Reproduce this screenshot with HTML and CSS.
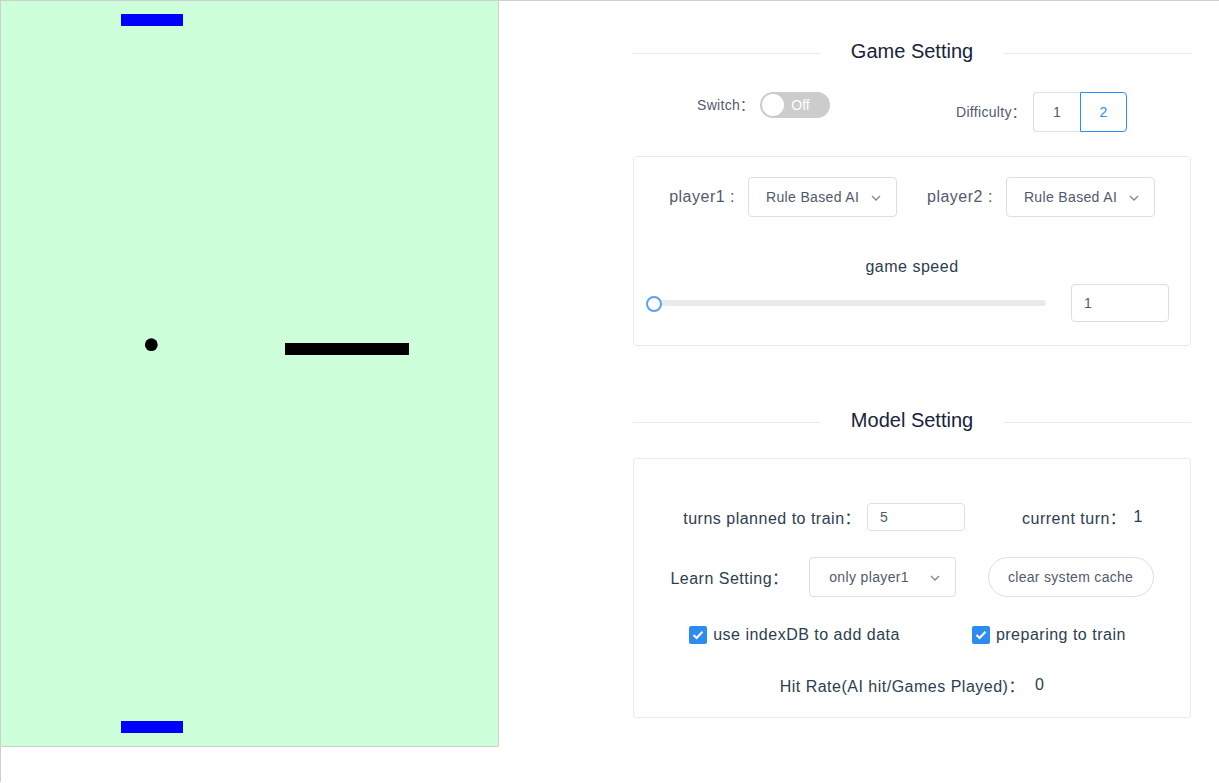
FILE: index.html
```html
<!DOCTYPE html>
<html>
<head>
<meta charset="utf-8">
<link rel="stylesheet" href="styles.css">
</head>
<body>
<div class="page">
  <div class="board">
    <svg width="497" height="745" viewBox="0 0 497 745">
      <rect x="120" y="13" width="62" height="12" fill="#0000ff"/>
      <rect x="120" y="720" width="62" height="12" fill="#0000ff"/>
      <circle cx="150.3" cy="343.7" r="6.4" fill="#000"/>
      <rect x="284" y="342" width="124" height="12" fill="#000"/>
    </svg>
  </div>
  <div class="panel">
    <div class="divider divider-first"><span class="divider-text">Game Setting</span></div>

    <div class="top-row">
      <div class="switch-item">
        <span class="form-label">Switch：</span>
        <span class="switch"><span class="switch-knob"></span><span class="switch-text">Off</span></span>
      </div>
      <div class="diff-item">
        <span class="form-label">Difficulty：</span>
        <div class="radio-group">
          <span class="radio-btn">1</span>
          <span class="radio-btn radio-active">2</span>
        </div>
      </div>
    </div>

    <div class="card card-game">
      <div class="players-row">
        <span class="player-label">player1 :</span>
        <div class="select select-player"><span class="select-text">Rule Based AI</span><svg class="chev" width="10" height="6" viewBox="0 0 10 6"><path d="M1 1 L5 5 L9 1" fill="none" stroke="#808695" stroke-width="1.3"/></svg></div>
        <span class="player-label player-label-2">player2 :</span>
        <div class="select select-player"><span class="select-text">Rule Based AI</span><svg class="chev" width="10" height="6" viewBox="0 0 10 6"><path d="M1 1 L5 5 L9 1" fill="none" stroke="#808695" stroke-width="1.3"/></svg></div>
      </div>
      <div class="speed-title">game speed</div>
      <div class="slider-row">
        <div class="slider">
          <div class="slider-track"></div>
          <span class="slider-handle"></span>
        </div>
        <div class="input input-speed">1</div>
      </div>
    </div>

    <div class="divider divider-second"><span class="divider-text">Model Setting</span></div>

    <div class="card card-model">
      <div class="model-row row-turns">
        <span class="text">turns planned to train：</span>
        <div class="input input-small">5</div>
        <span class="text current-turn">current turn：</span>
        <span class="text turn-value">1</span>
      </div>
      <div class="model-row row-learn">
        <span class="text">Learn Setting：</span>
        <div class="select select-learn"><span class="select-text select-text-center">only player1</span><svg class="chev" width="10" height="6" viewBox="0 0 10 6"><path d="M1 1 L5 5 L9 1" fill="none" stroke="#808695" stroke-width="1.3"/></svg></div>
        <span class="btn-round">clear system cache</span>
      </div>
      <div class="model-row row-check">
        <label class="check"><span class="check-box"><svg width="12" height="10" viewBox="0 0 12 10"><path d="M1.5 5 L4.6 8 L10.5 1.8" fill="none" stroke="#fff" stroke-width="2"/></svg></span><span class="text">use indexDB to add data</span></label>
        <label class="check check-2"><span class="check-box"><svg width="12" height="10" viewBox="0 0 12 10"><path d="M1.5 5 L4.6 8 L10.5 1.8" fill="none" stroke="#fff" stroke-width="2"/></svg></span><span class="text">preparing to train</span></label>
      </div>
      <div class="model-row row-hit">
        <span class="text">Hit Rate(AI hit/Games Played)：</span>
        <span class="text hit-value">0</span>
      </div>
    </div>
  </div>
</div>
</body>
</html>
```

FILE: styles.css
```css
html, body {
  margin: 0;
  padding: 0;
  background: #fff;
}
body {
  font-family: "Liberation Sans", Arial, "Noto Sans CJK SC", sans-serif;
  color: #2c3e50;
}
.page {
  display: flex;
  align-items: flex-start;
  border-top: 1px solid #cfcfcf;
  border-left: 1px solid #cfcfcf;
  min-height: 782px;
  box-sizing: border-box;
}
.board {
  width: 497px;
  height: 745px;
  background: #cdffda;
  border-right: 1px solid #cfcfcf;
  border-bottom: 1px solid #cfcfcf;
  flex: none;
}
.board svg { display: block; }

.panel {
  margin-left: 134px;
  width: 558px;
  flex: none;
}

/* dividers */
.divider {
  display: flex;
  align-items: center;
  height: 30px;
}
.divider::before, .divider::after {
  content: "";
  flex: 1;
  height: 1px;
  background: #eaeaea;
}
.divider-text {
  padding: 0 30px;
  font-size: 20px;
  color: #17233d;
  line-height: 30px;
  position: relative;
  top: -2px;
}
.divider-first { margin-top: 37px; }
.divider-second { margin-top: 61px; }

/* top row */
.top-row {
  margin-top: 24px;
  display: flex;
  justify-content: space-between;
  padding: 0 64px;
}
.form-label {
  font-size: 14px;
  color: #515a6e;
  letter-spacing: 0.3px;
}
.switch-item {
  display: flex;
  align-items: center;
  height: 24px;
}
.switch {
  margin-left: 6px;
  width: 70px;
  height: 26px;
  border-radius: 13px;
  background: #cccccc;
  display: flex;
  align-items: center;
  box-sizing: border-box;
  padding-left: 2px;
  flex: none;
  position: relative;
  top: 1px;
}
.switch-knob {
  width: 22px;
  height: 22px;
  border-radius: 50%;
  background: #fff;
}
.switch-text {
  color: #fff;
  font-size: 14px;
  margin-left: 7px;
}
.diff-item {
  display: flex;
  align-items: center;
}
.diff-item .form-label {
  position: relative;
  top: -1px;
}
.radio-group {
  display: flex;
  margin-left: 7px;
}
.radio-btn {
  width: 47px;
  height: 40px;
  box-sizing: border-box;
  border: 1px solid #dcdee2;
  display: flex;
  align-items: center;
  justify-content: center;
  font-size: 14px;
  color: #515a6e;
}
.radio-btn:first-child {
  border-radius: 4px 0 0 4px;
  border-right: none;
}
.radio-active {
  border-color: #2d8cf0;
  color: #2d8cf0;
  border-radius: 0 4px 4px 0;
}

/* cards */
.card {
  border: 1px solid #e8eaec;
  border-radius: 4px;
}
.card-game {
  margin-top: 24px;
  padding: 20px 20px 23px;
}
.players-row {
  display: flex;
  align-items: center;
  justify-content: center;
  height: 40px;
}
.player-label {
  font-size: 16px;
  color: #515a6e;
  margin-right: 13px;
  letter-spacing: 0.5px;
}
.player-label-2 { margin-left: 30px; }
.select {
  height: 40px;
  box-sizing: border-box;
  border: 1px solid #dcdee2;
  border-radius: 4px;
  display: flex;
  align-items: center;
  position: relative;
  flex: none;
}
.select-player {
  width: 149px;
  padding-left: 17px;
}
.select-text {
  font-size: 14px;
  color: #515a6e;
  letter-spacing: 0.35px;
}
.chev {
  position: absolute;
  right: 15px;
  top: 17px;
}
.speed-title {
  margin-top: 39px;
  line-height: 22px;
  text-align: center;
  font-size: 16px;
  color: #2c3e50;
  letter-spacing: 0.5px;
}
.slider-row {
  margin-top: 6px;
  display: flex;
  align-items: center;
  height: 38px;
}
.slider {
  width: 392px;
  height: 6px;
  position: relative;
  margin-left: 0;
}
.slider-track {
  height: 6px;
  background: #e8eaec;
  border-radius: 3px;
}
.slider-handle {
  position: absolute;
  left: -8px;
  top: -4px;
  width: 16px;
  height: 16px;
  box-sizing: border-box;
  border: 2px solid #57a3f3;
  border-radius: 50%;
  background: #fff;
}
.input {
  box-sizing: border-box;
  border: 1px solid #dcdee2;
  border-radius: 4px;
  display: flex;
  align-items: center;
  font-size: 14px;
  color: #515a6e;
  flex: none;
}
.input-speed {
  margin-left: 25px;
  width: 98px;
  height: 38px;
  padding-left: 12px;
}

/* model card */
.card-model {
  margin-top: 21px;
  padding: 43px 20px 21px;
}
.model-row {
  display: flex;
  align-items: center;
  justify-content: center;
}
.text {
  font-size: 16px;
  color: #2c3e50;
  letter-spacing: 0.5px;
  white-space: nowrap;
}
.row-turns {
  height: 30px;
  padding-left: 2px;
}
.input-small {
  width: 98px;
  height: 28px;
  margin-left: 6px;
  padding-left: 12px;
}
.current-turn { margin-left: 57px; }
.turn-value { margin-left: 7px; }
.row-learn {
  margin-top: 25px;
  height: 40px;
}
.select-learn {
  width: 147px;
  margin-left: 20px;
  padding-right: 26px;
  justify-content: center;
}
.btn-round {
  margin-left: 32px;
  width: 166px;
  height: 40px;
  box-sizing: border-box;
  border: 1px solid #dcdee2;
  border-radius: 20px;
  display: flex;
  align-items: center;
  justify-content: center;
  font-size: 14px;
  color: #515a6e;
  letter-spacing: 0.3px;
  flex: none;
}
.row-check {
  margin-top: 27px;
  height: 22px;
  padding-right: 9px;
}
.check {
  display: flex;
  align-items: center;
}
.check-2 { margin-left: 72px; }
.check-box {
  width: 18px;
  height: 18px;
  border-radius: 2px;
  background: #2d8cf0;
  display: flex;
  align-items: center;
  justify-content: center;
  margin-right: 6px;
  flex: none;
}
.check-box svg { display: block; }
.row-hit {
  margin-top: 28px;
  height: 22px;
}
.hit-value { margin-left: 10px; }
```
